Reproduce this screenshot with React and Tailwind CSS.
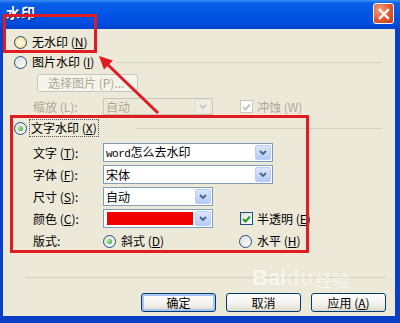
import React from "react";

const F = { fontFamily: '"Noto Sans CJK SC", "Noto Sans", sans-serif' };

function Radio({ checked, hover }) {
  return (
    <span
      className={`w-[13px] h-[13px] rounded-full border border-[#1C5180] flex items-center justify-center shrink-0 ${
        hover
          ? "bg-[radial-gradient(circle,#FFF8D8_30%,#F9DA8A_70%,#F2B83C_100%)]"
          : "bg-[linear-gradient(135deg,#DCDCD7,#FFFFFF)]"
      }`}
    >
      {checked && <span className="w-[5px] h-[5px] rounded-full bg-[radial-gradient(circle_at_35%_35%,#A8F0A0,#21A121)]" />}
    </span>
  );
}

function Check({ disabled }) {
  return (
    <span
      className={`w-[13px] h-[13px] border flex items-center justify-center shrink-0 ${
        disabled ? "border-[#CAC8BB] bg-white" : "border-[#1C5180] bg-[linear-gradient(135deg,#DCDCD7,#FFFFFF)]"
      }`}
    >
      <svg width="9" height="8" viewBox="0 0 9 8">
        <path d="M1 4 L3.5 6.5 L8 1.5" fill="none" stroke={disabled ? "#CAC8BB" : "#21A121"} strokeWidth="2" />
      </svg>
    </span>
  );
}

function Arrow({ disabled }) {
  return (
    <span
      className={`w-[16px] h-[15px] mr-px rounded-[2px] border flex items-center justify-center shrink-0 ${
        disabled
          ? "border-[#E5E2D6] bg-[#F0EEE4]"
          : "border-[#B9CDF8] bg-[linear-gradient(#DCE6FD,#B4CBF6)]"
      }`}
    >
      <svg width="8" height="5" viewBox="0 0 8 5">
        <path d="M1 1 L4 4 L7 1" fill="none" stroke={disabled ? "#C9C7BA" : "#4D6185"} strokeWidth="1.8" />
      </svg>
    </span>
  );
}

function Combo({ w, h = 19, children, disabled }) {
  return (
    <div
      className={`flex items-center border shrink-0 ${disabled ? "border-[#C9C7BA] bg-[#ECE9D8]" : "border-[#7F9DB9] bg-white"}`}
      style={{ width: w, height: h }}
    >
      <div className="flex-1 flex items-center h-full pl-[2px] pr-[2px] overflow-hidden">{children}</div>
      <Arrow disabled={disabled} />
    </div>
  );
}

function Btn({ children, def }) {
  return (
    <div
      className={`w-[75px] h-[19px] rounded-[3px] border border-[#003C74] flex items-center justify-center text-[12px] text-black bg-[linear-gradient(#FFFFFF,#F3F2EC_60%,#DCD8CC)] ${
        def ? "shadow-[inset_0_0_0_2px_#A9C5F3]" : ""
      }`}
    >
      {children}
    </div>
  );
}

export default function App() {
  return (
    <div className="w-[400px] h-[323px] relative overflow-hidden bg-[#0A3FC8] flex flex-col select-none" style={F}>
      {/* title bar */}
      <div className="h-[29px] shrink-0 flex items-start justify-between pl-[6px] pr-[6px] pt-[3px] bg-[linear-gradient(#3C8DF5_0%,#0A5FE8_12%,#0055E5_50%,#004BDD_85%,#0040CC_100%)]">
        <span className="text-white font-bold text-[14px] leading-[18px] tracking-[1px] [text-shadow:1px_1px_0_#0A1E80]">水印</span>
        <span className="w-[21px] h-[21px] rounded-[3px] border border-white bg-[radial-gradient(circle_at_30%_30%,#F2A080,#E0592F_55%,#C43A16)] flex items-center justify-center">
          <svg width="12" height="12" viewBox="0 0 12 12">
            <path d="M2 2 L10 10 M10 2 L2 10" stroke="white" strokeWidth="2.4" strokeLinecap="square" />
          </svg>
        </span>
      </div>

      {/* body */}
      <div className="flex-1 ml-[3px] mr-[5px] mb-[7px] bg-[#ECE9D8] flex flex-col text-[12px] text-black leading-[16px]">
        {/* no watermark */}
        <div className="mt-[5px] h-[16px] flex items-center pl-[11px] gap-[5px]">
          <Radio hover />
          <span>无水印 (<u>N</u>)</span>
        </div>
        {/* picture watermark */}
        <div className="mt-[4px] h-[16px] flex items-center pl-[11px]">
          <Radio />
          <span className="ml-[5px]">图片水印 (<u>I</u>)</span>
          <span className="flex-1 ml-[22px] mr-[13px] h-px bg-[#D3D0BE]" />
        </div>
        <div className="mt-[4px] pl-[34px] flex">
          <div className="w-[101px] h-[18px] rounded-[3px] border border-[#C9C7BA] bg-[#F5F4EA] text-[#ACA899] flex items-center pl-[10px]">
            选择图片 (P)...
          </div>
        </div>
        <div className="mt-[6px] h-[17px] flex items-center pl-[30px] text-[#ACA899]">
          <span className="w-[70px]">缩放 (L):</span>
          <Combo w={110} h={17} disabled>
            <span className="text-[#ACA899]">自动</span>
          </Combo>
          <span className="ml-[27px] flex items-center gap-[4px]">
            <Check disabled />
            <span>冲蚀 (W)</span>
          </span>
        </div>
        {/* text watermark */}
        <div className="mt-[5px] h-[16px] flex items-center pl-[11px]">
          <Radio checked />
          <span className="ml-[2px] px-[1px] border border-dotted border-[#555]">文字水印 (<u>X</u>)</span>
          <span className="flex-1 ml-[37px] mr-[13px] h-px bg-[#D3D0BE]" />
        </div>
        <div className="mt-[7px] h-[19px] flex items-center pl-[30px]">
          <span className="w-[70px]">文字 (<u>T</u>):</span>
          <Combo w={170}>
            <span><span className="font-['Liberation_Mono',monospace] text-[11px] tracking-[-0.5px]">word</span>怎么去水印</span>
          </Combo>
        </div>
        <div className="mt-[3px] h-[19px] flex items-center pl-[30px]">
          <span className="w-[70px]">字体 (<u>F</u>):</span>
          <Combo w={170}>
            <span>宋体</span>
          </Combo>
        </div>
        <div className="mt-[3px] h-[19px] flex items-center pl-[30px]">
          <span className="w-[70px]">尺寸 (<u>S</u>):</span>
          <Combo w={110}>
            <span>自动</span>
          </Combo>
        </div>
        <div className="mt-[3px] h-[19px] flex items-center pl-[30px]">
          <span className="w-[70px]">颜色 (<u>C</u>):</span>
          <Combo w={110}>
            <span className="w-full h-[13px] bg-[#F00000] ml-px" />
          </Combo>
          <span className="ml-[27px] flex items-center gap-[4px]">
            <Check />
            <span>半透明 (<u>E</u>)</span>
          </span>
        </div>
        <div className="mt-[5px] h-[16px] flex items-center pl-[30px]">
          <span className="w-[70px]">版式:</span>
          <span className="flex items-center gap-[5px]">
            <Radio checked />
            <span>斜式 (<u>D</u>)</span>
          </span>
          <span className="ml-[75px] flex items-center gap-[5px]">
            <Radio />
            <span>水平 (<u>H</u>)</span>
          </span>
        </div>
        <div className="mt-[28px] ml-[22px] mr-[9px] h-px bg-[#D3D0BE]" />
        <div className="mt-[15px] flex justify-end gap-[10px] pr-[9px]">
          <Btn def>确定</Btn>
          <Btn>取消</Btn>
          <Btn>应用 (<u>A</u>)</Btn>
        </div>
      </div>

      {/* Baidu watermark */}
      <div className="absolute left-[252px] top-[266px] flex items-end text-white/60 pointer-events-none">
        <span className="font-['Liberation_Sans',sans-serif] font-bold text-[22px] leading-[24px]">Bai</span>
        <span className="font-['Liberation_Sans',sans-serif] font-bold text-[22px] leading-[24px] text-white/40">du</span>
        <span className="text-[17px] leading-[21px] ml-[2px]">经验</span>
      </div>

      {/* red annotations */}
      <div className="absolute left-[3px] top-[14px] w-[94px] h-[39px] border-[3px] border-[#E01B22] pointer-events-none" />
      <div className="absolute left-[10px] top-[115px] w-[299px] h-[138px] border-[3px] border-[#E01B22] pointer-events-none" />
      <svg className="absolute left-0 top-0 pointer-events-none" width="400" height="323" viewBox="0 0 400 323">
        <line x1="158" y1="113" x2="106" y2="63" stroke="#E01B22" strokeWidth="3" />
        <polygon points="99,56 113,60.5 104,69.5" fill="#E01B22" />
      </svg>
    </div>
  );
}
